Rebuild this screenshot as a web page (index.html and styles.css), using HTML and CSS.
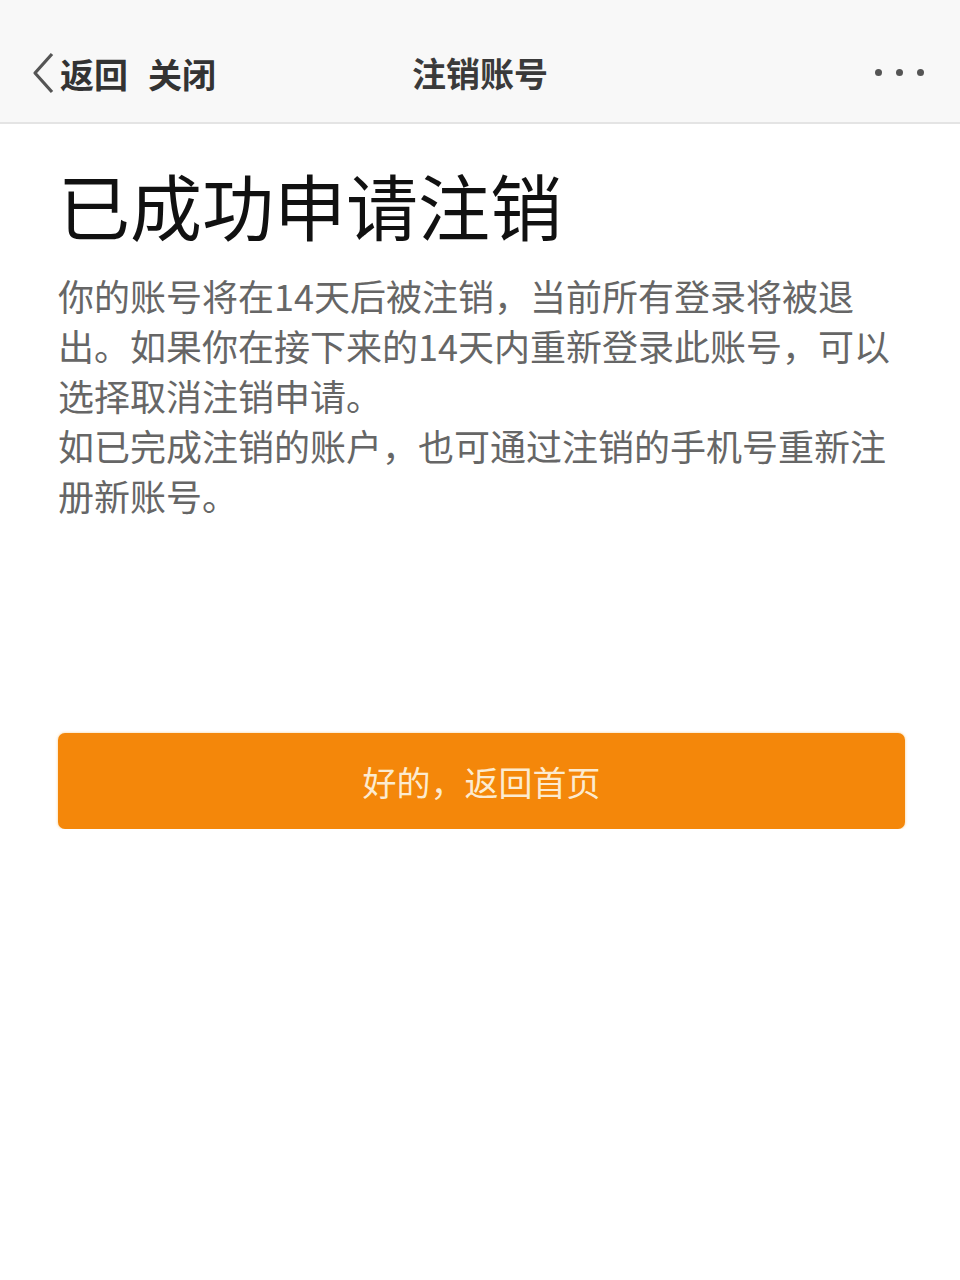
FILE: index.html
```html
<!DOCTYPE html>
<html>
<head>
  <meta charset="utf-8">
  <title>注销账号</title>
  <link rel="stylesheet" href="styles.css">
</head>
<body>

<div class="navbar">
  <div class="nav-left">
    <svg class="back-icon" width="26" height="44" viewBox="0 0 26 44">
      <polyline points="22,3 5,22 22,41" fill="none" stroke="#555" stroke-width="3.2" stroke-linejoin="round"/>
    </svg>
    <span class="nav-link">返回</span>
    <span class="nav-link">关闭</span>
  </div>
  <div class="nav-title">注销账号</div>
  <div class="nav-more">
    <span class="dot"></span>
    <span class="dot"></span>
    <span class="dot"></span>
  </div>
</div>

<div class="content">
  <h1 class="title">已成功申请注销</h1>
  <p class="desc">你的账号将在14天后被注销，当前所有登录将被退出。如果你在接下来的14天内重新登录此账号，可以选择取消注销申请。<br>如已完成注销的账户，也可通过注销的手机号重新注册新账号。</p>

  <button class="btn-home" type="button">好的，返回首页</button>
</div>

</body>
</html>
```

FILE: styles.css
```css
body {
  margin: 0;
  background-color: #fff;
  font-family: "Noto Sans CJK SC", "Noto Sans", sans-serif;
}
.navbar {
  position: relative;
  height: 124px;
  padding: 22px 30px 0;
  background-color: #f8f8f8;
  border-bottom: 2px solid #e4e4e4;
  display: flex;
  align-items: center;
  justify-content: space-between;
  box-sizing: border-box;
}
.nav-left {
  display: flex;
  align-items: center;
  margin-top: 2px;
}
.back-icon {
  margin-right: 4px;
}
.nav-link {
  font-size: 34px;
  font-weight: bold;
  color: #333;
  margin-right: 20px;
}
/* centred over the whole bar, independent of the side items */
.nav-title {
  position: absolute;
  left: 0;
  right: 0;
  text-align: center;
  font-size: 34px;
  font-weight: bold;
  color: #3a3a3a;
  pointer-events: none;
}
.nav-more {
  display: flex;
  gap: 14px;
  margin-right: 6px;
}
.dot {
  width: 7px;
  height: 7px;
  border-radius: 50%;
  background-color: #555;
}
.content {
  padding: 0 58px;
}
.title {
  margin: 0;
  padding-top: 30px;
  font-size: 72px;
  font-weight: normal;
  line-height: 100px;
  color: #111;
}
.desc {
  margin: 16px 0 0;
  font-size: 36px;
  line-height: 50px;
  color: #666;
}
.btn-home {
  display: block;
  width: 847px;
  height: 96px;
  margin-top: 213px;
  border: none;
  border-radius: 7px;
  background-color: #f4870a;
  box-shadow: 0 0 3px rgba(245, 170, 60, 0.6);
  color: #fcebd0;
  font-family: inherit;
  font-size: 34px;
}
```
